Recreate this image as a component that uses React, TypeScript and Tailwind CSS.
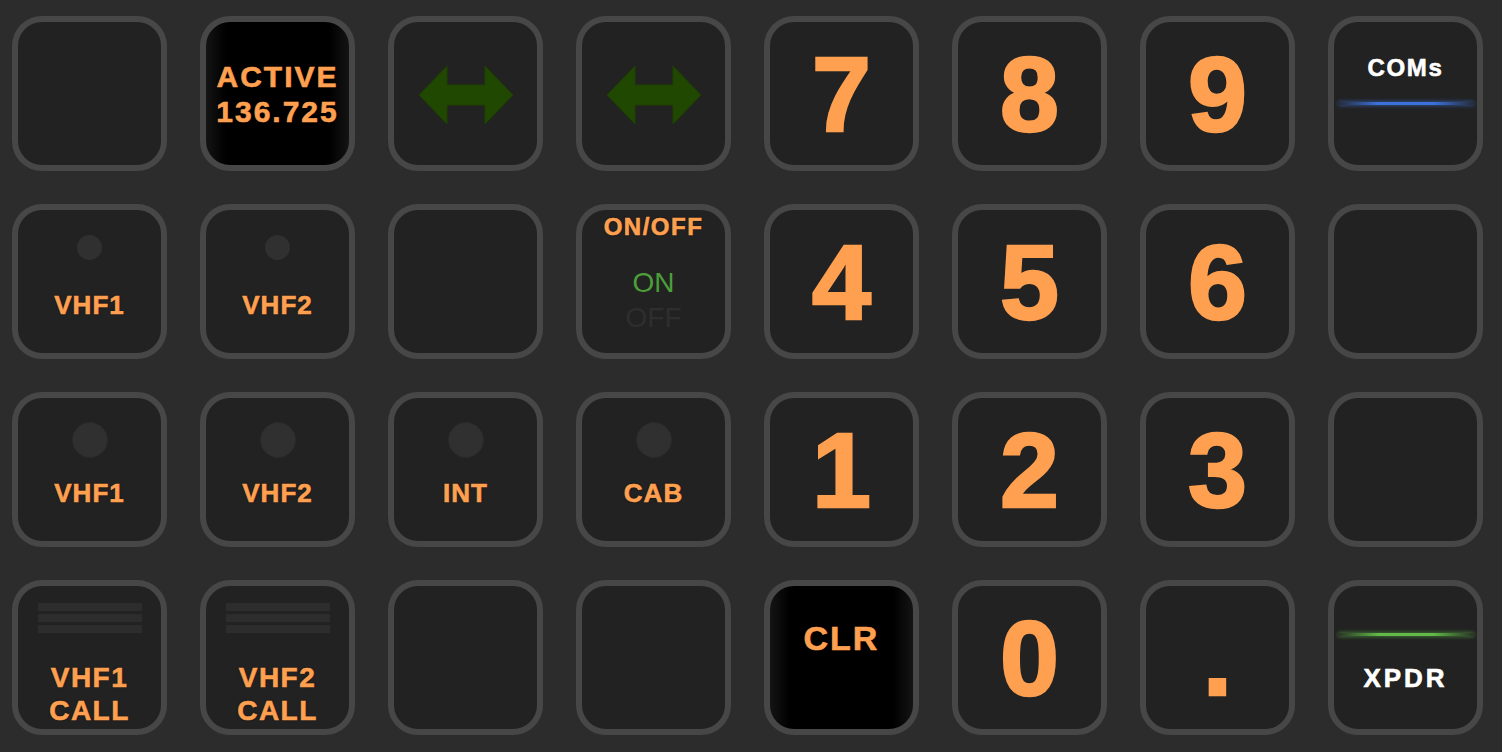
import React from "react";

const ORANGE = "text-[#ffa050]";
const SHADOW = "[text-shadow:0_0_2px_rgba(0,0,0,0.8)] [-webkit-text-stroke:0.6px_#ffa050]";

function Key({ children, dark = false, className = "" }: { children?: React.ReactNode; dark?: boolean; className?: string }) {
  return (
    <div
      className={
        "w-[155px] h-[155px] rounded-[30px] border-[6px] border-[#474747] overflow-hidden flex flex-col items-center " +
        (dark
          ? "bg-[linear-gradient(to_right,#141414_0%,#000_14%,#000_86%,#141414_100%)] "
          : "bg-[#222222] ") +
        className
      }
    >
      {children}
    </div>
  );
}

function Digit({ d }: { d: string }) {
  return (
    <Key className="justify-center">
      <div className={`${ORANGE} font-bold text-[106px] leading-none [-webkit-text-stroke:2.5px_#ffa050]`}>{d}</div>
    </Key>
  );
}

function Arrow() {
  return (
    <Key className="justify-center">
      <svg width="94" height="58" viewBox="0 0 94 58" className="mt-[3px]">
        <polygon
          points="0,29 28,0 28,19 66,19 66,0 94,29 66,58 66,39 28,39 28,58"
          fill="#204800"
          stroke="#1c4000"
          strokeWidth="1"
        />
      </svg>
    </Key>
  );
}

function Lamp({ label, big }: { label: string; big: boolean }) {
  return (
    <Key>
      <div
        className={
          big
            ? "mt-[24px] w-[36px] h-[36px] rounded-full bg-[#303030] border border-[#2b2b2b]"
            : "mt-[25px] w-[25px] h-[25px] rounded-full bg-[#303030]"
        }
      />
      <div
        className={`${ORANGE} ${SHADOW} font-bold text-[26px] leading-none tracking-[1px] ${big ? "mt-[22px]" : "mt-[32px]"}`}
      >
        {label}
      </div>
    </Key>
  );
}

function Call({ n }: { n: string }) {
  return (
    <Key>
      <div className="mt-[17px] w-[104px] flex flex-col gap-[3px]">
        <div className="h-[8px] bg-[#2d2d2d]" />
        <div className="h-[8px] bg-[#2d2d2d]" />
        <div className="h-[8px] bg-[#2d2d2d]" />
      </div>
      <div className={`${ORANGE} ${SHADOW} font-bold text-[28px] leading-[33px] tracking-[1.5px] mt-[28px] text-center`}>
        <div>{n}</div>
        <div>CALL</div>
      </div>
    </Key>
  );
}

export default function App() {
  return (
    <div
      className="w-[1502px] h-[752px] bg-[#2c2c2c] pl-[12px] pt-[16px] overflow-hidden"
      style={{ fontFamily: '"Liberation Sans", Arial, sans-serif' }}
    >
      <div className="grid grid-cols-[repeat(8,155px)] gap-[33px]">
        {/* Row 1 */}
        <Key />
        <Key dark>
          <div className={`${ORANGE} ${SHADOW} font-bold text-[30px] leading-[35px] tracking-[2px] mt-[37px] text-center`}>
            <div>ACTIVE</div>
            <div>136.725</div>
          </div>
        </Key>
        <Arrow />
        <Arrow />
        <Digit d="7" />
        <Digit d="8" />
        <Digit d="9" />
        <Key>
          <div className="text-white font-bold text-[24px] leading-none tracking-[1.7px] mt-[34px] [-webkit-text-stroke:0.6px_#ffffff]">COMs</div>
          <div className="mt-[22px] w-[136px] h-[3px] rounded-full bg-[linear-gradient(to_right,rgba(61,114,221,0.1),#3d72dd_30%,#3d72dd_70%,rgba(61,114,221,0.1))] shadow-[0_0_4px_rgba(61,114,221,0.8)]" />
        </Key>

        {/* Row 2 */}
        <Lamp label="VHF1" big={false} />
        <Lamp label="VHF2" big={false} />
        <Key />
        <Key>
          <div className={`${ORANGE} ${SHADOW} font-bold text-[24px] leading-none tracking-[1.5px] mt-[5px]`}>ON/OFF</div>
          <div className="text-[28px] leading-[35px] mt-[26px] text-center">
            <div className="text-[#4c9f38]">ON</div>
            <div className="text-[#2e2e2e]">OFF</div>
          </div>
        </Key>
        <Digit d="4" />
        <Digit d="5" />
        <Digit d="6" />
        <Key />

        {/* Row 3 */}
        <Lamp label="VHF1" big />
        <Lamp label="VHF2" big />
        <Lamp label="INT" big />
        <Lamp label="CAB" big />
        <Digit d="1" />
        <Digit d="2" />
        <Digit d="3" />
        <Key />

        {/* Row 4 */}
        <Call n="VHF1" />
        <Call n="VHF2" />
        <Key />
        <Key />
        <Key dark>
          <div className={`${ORANGE} ${SHADOW} font-bold text-[34px] leading-none tracking-[2px] mt-[35px]`}>CLR</div>
        </Key>
        <Digit d="0" />
        <Digit d="." />
        <Key>
          <div className="mt-[47px] w-[136px] h-[3px] rounded-full bg-[linear-gradient(to_right,rgba(96,186,72,0.1),#62ba48_30%,#62ba48_70%,rgba(96,186,72,0.1))] shadow-[0_0_4px_rgba(96,186,72,0.8)]" />
          <div className="text-white font-bold text-[26px] leading-none tracking-[3px] mt-[29px] [-webkit-text-stroke:0.6px_#ffffff]">XPDR</div>
        </Key>
      </div>
    </div>
  );
}
